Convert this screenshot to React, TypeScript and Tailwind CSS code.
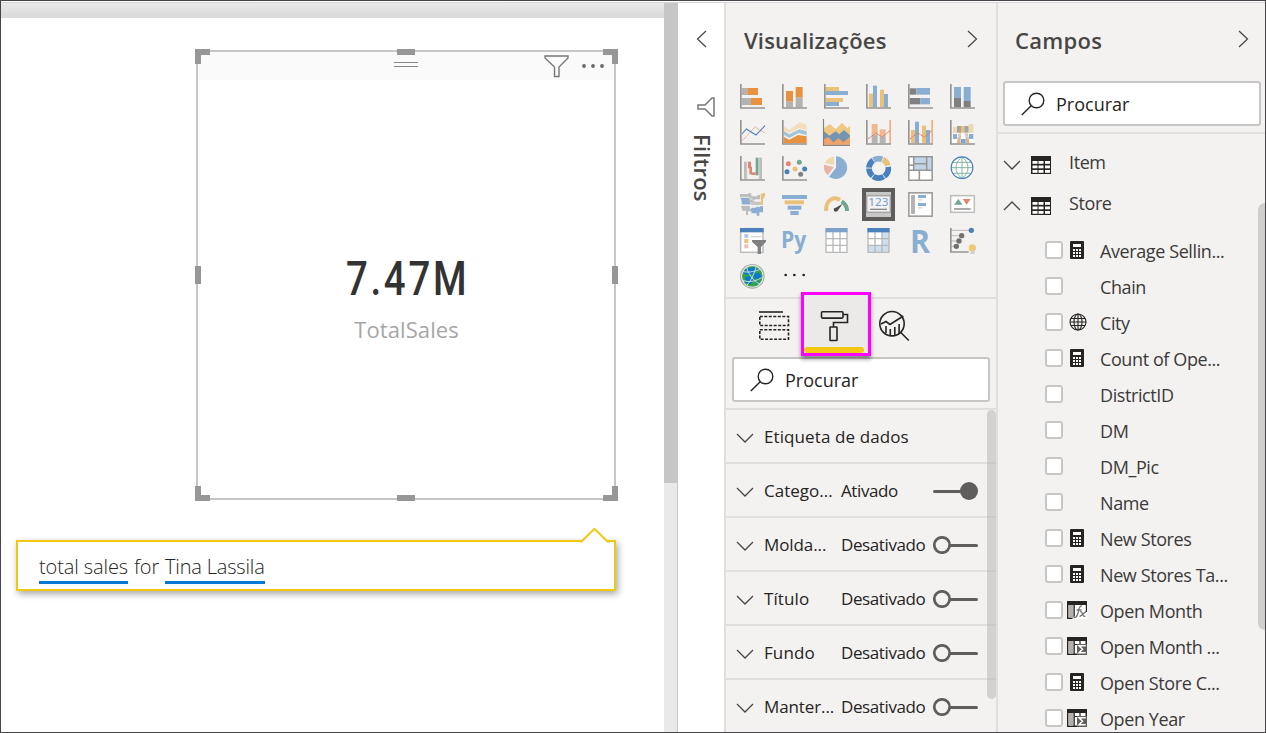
import type { ReactNode } from "react";

const BLUE = "#8aaed2";
const DEEP = "#4a80bb";
const YELLOW = "#e9c17b";
const ORANGE = "#e8913f";
const GRAY = "#b3b3b3";
const DARK = "#808080";
const RED = "#e08570";
const GREEN = "#6fa892";
const AXIS = "#979593";

function Icon({ children }: { children: ReactNode }) {
  return (
    <svg viewBox="0 0 75 75" className="size-[25px] overflow-visible" fill="none">
      {children}
    </svg>
  );
}

const Axis = () => <path d="M2.5 0V72H75" stroke={AXIS} strokeWidth="5" />;

type Bar = [number, number, number, number, string];
function Bars({ items }: { items: Bar[] }) {
  return (
    <>
      {items.map(([x, y, w, h, c], i) => (
        <rect key={i} x={x} y={y} width={w} height={h} fill={c} />
      ))}
    </>
  );
}

const chartIcons: ReactNode[] = [
  <Icon><Bars items={[[5, 12, 17, 21, GRAY], [22, 12, 32, 21, ORANGE], [5, 42, 28, 21, GRAY], [33, 42, 33, 21, ORANGE]]} /><Axis /></Icon>,
  <Icon><Bars items={[[12, 21, 21, 32, ORANGE], [12, 53, 21, 17, GRAY], [41, 9, 21, 32, ORANGE], [41, 41, 21, 29, GRAY]]} /><Axis /></Icon>,
  <Icon><Bars items={[[5, 9, 40, 12, YELLOW], [5, 21, 67, 12, BLUE], [5, 42, 52, 12, YELLOW], [5, 54, 40, 12, BLUE]]} /><Axis /></Icon>,
  <Icon><Bars items={[[9, 29, 12, 41, YELLOW], [21, 5, 12, 65, BLUE], [42, 17, 12, 53, YELLOW], [54, 30, 12, 40, BLUE]]} /><Axis /></Icon>,
  <Icon><Bars items={[[5, 13, 20, 19, DARK], [25, 12, 41, 20, BLUE], [5, 42, 32, 19, DARK], [37, 42, 29, 19, BLUE]]} /><Axis /></Icon>,
  <Icon><Bars items={[[12, 9, 21, 32, BLUE], [12, 41, 21, 29, DARK], [41, 9, 21, 42, BLUE], [41, 51, 21, 19, DARK]]} /><Axis /></Icon>,

  <Icon><path d="M6 63L46 20L58 30L75 39" stroke="#efb5a5" strokeWidth="3" /><path d="M6 42L19 27L48 45L75 17" stroke={DEEP} strokeWidth="3.2" /><Axis /></Icon>,
  <Icon>
    <path d="M5 18L22 29L54 6L74 14V32L52 24L22 40L5 33Z" fill="#f3dfc0" />
    <path d="M5 33L22 43L52 28L74 34V46L50 39L22 54L5 44Z" fill="#a5c3d6" />
    <path d="M5 50L22 59L48 45L74 49V70H5Z" fill={ORANGE} />
    <Axis />
  </Icon>,
  <Icon>
    <path d="M0 24L18 12L35 28L54 8L70 25L78 17V72H0Z" fill="#efc883" />
    <path d="M0 34L16 47L35 34L46 43L60 30L78 46V74H0Z" fill="#7395b2" />
    <path d="M0 57L14 52L28 67L44 54L58 67L78 50V74H0Z" fill="#f0a268" />
    <path d="M-1.5 -3V76.5H78" stroke="#85817d" strokeWidth="3.5" />
  </Icon>,
  <Icon><Bars items={[[17, 12, 18, 32, "#efb890"], [17, 44, 18, 26, GRAY], [41, 28, 18, 21, "#efb890"], [41, 49, 18, 21, GRAY], [70, 0, 5, 70, "#eeae80"]]} /><path d="M6 57L29 39L49 51L72 32" stroke="#df745b" strokeWidth="3" strokeDasharray="4 1" /><Axis /></Icon>,
  <Icon><Bars items={[[9, 30, 12, 40, YELLOW], [21, 5, 12, 65, BLUE], [42, 17, 12, 53, YELLOW], [54, 30, 12, 40, BLUE], [70, 0, 5, 70, "#eeae80"]]} /><path d="M6 57L29 39L49 51L72 32" stroke="#df745b" strokeWidth="3" strokeDasharray="4 1" /><Axis /></Icon>,
  <Icon>
    <Bars items={[[5, 40, 66, 30, "#ffffff"], [9, 21, 12, 18, "#eed9b5"], [21, 18, 12, 20, "#a5a5a5"], [33, 18, 10, 20, YELLOW], [43, 18, 13, 20, "#a5a5a5"], [56, 12, 14, 26, "#eed9b5"], [9, 42, 12, 15, BLUE], [57, 42, 13, 15, BLUE], [32, 57, 15, 12, "#7ca5cf"]]} />
    <path d="M25 42L34 38L30 70H21ZM54 42L45 38L49 70H58Z" fill="#edac79" />
    <path d="M22 57L33 40M56 57L44 40" stroke="#c7d9ea" strokeWidth="5" />
    <Axis />
  </Icon>,

  <Icon>
    <Bars items={[[12, 17, 9, 53, "#bebdbb"], [24, 17, 9, 20, RED], [28, 32, 8, 23, RED], [34, 49, 13, 8, RED], [47, 5, 9, 53, GREEN], [57, 5, 9, 65, "#bebdbb"]]} />
    <path d="M21 17V70M57 5V70" stroke="#dddcda" strokeWidth="2" /><Axis />
  </Icon>,
  <Icon>
    {([[19, 23, RED], [52, 19, GREEN], [39, 39, YELLOW], [15, 47, DEEP], [68, 39, DEEP], [56, 55, DARK]] as [number, number, string][]).map(([x, y, c], i) => <circle key={i} cx={x} cy={y} r="7.5" fill={c} />)}
    <Axis />
  </Icon>,
  <Icon>
    <path d="M36 35V1A34 34 0 1 1 15 62Z" fill={BLUE} />
    <path d="M29 33L0 26A34 34 0 0 0 12 58Z" fill="#e9b3a5" />
    <path d="M30 28V2A33 33 0 0 0 3 21Z" fill="#eed9b0" />
  </Icon>,
  <Icon>
    {([[-31, 52, BLUE], [26, 47, YELLOW], [81, 63, DEEP], [149, 65, DEEP], [219, 50, DEEP], [274, 51, DEEP]] as [number, number, string][]).map(([start, len, c], i) => (
      <circle key={i} cx="38" cy="37" r="29" stroke={c} strokeWidth="17" pathLength="360" strokeDasharray={len + " 400"} transform={"rotate(" + (start - 90) + " 38 37)"} />
    ))}
  </Icon>,
  <Icon>
    <rect x="2" y="2" width="71" height="71" fill="#fff" />
    <Bars items={[[18, 2, 38, 20, "#c2d4e8"], [18, 22, 38, 20, "#c2d4e8"], [56, 2, 16, 40, "#c2d4e8"]]} />
    <path d="M2.5 2.5H72.5V72.5H2.5ZM2 43H73M34 43V73M17 2V43M56 2V43M17 23H56M2 28H17" stroke={AXIS} strokeWidth="4.5" />
  </Icon>,
  <Icon>
    <circle cx="36" cy="35" r="32" fill="#fff" />
    <path d="M36 3V67M36 3C12 19 12 51 36 67M36 3C60 19 60 51 36 67M4 35H68M10 19H62M10 52H62" stroke="#83b5a1" strokeWidth="3" />
    <circle cx="36" cy="35" r="32.5" stroke={DEEP} strokeWidth="3.5" />
  </Icon>,

  <Icon>
    <path d="M0 6H25V4H34V13H52V9H60V22H44V30H27V20H0Z" fill="#bcbcbc" />
    <path d="M3 18H27V28H31V38H6Z" fill={BLUE} />
    <path d="M3 41H30V50H36V58H24V69H18V56H7Z" fill="#bcbcbc" />
    <path d="M31 29H63V39H33Z" fill="#c6c6c6" />
    <path d="M34 47H48V43H69V61H58V71H50V64H34Z" fill={BLUE} />
    <path d="M0 16H27M5 39H32L42 44H60M28 17L41 26H59" stroke="#f3f2f1" strokeWidth="2.5" />
    <path d="M62 6L75 2V13L69 22V38H63Z" fill={YELLOW} />
  </Icon>,
  <Icon><Bars items={[[0, 9, 75, 12, BLUE], [8, 25, 58, 12, YELLOW], [17, 41, 41, 12, BLUE], [25, 57, 25, 12, BLUE]]} /></Icon>,
  <Icon>
    <path d="M6 57C6 19 32 13 48 24" stroke={YELLOW} strokeWidth="12" />
    <path d="M53 28C64 35 69 42 69 57" stroke={GREEN} strokeWidth="12" />
    <path d="M33 49L56 35L40 58Z" fill="#4d4d4d" /><circle cx="35" cy="53" r="6" fill="#4d4d4d" />
  </Icon>,
  <Icon>
    <rect x="-6" y="-6" width="87" height="87" fill="#c8c8c8" stroke="#5d5c5a" strokeWidth="12" />
    <rect x="2" y="11" width="71" height="50" fill="#f3f2f1" stroke="#a6a6a6" strokeWidth="4.5" />
    <text x="37" y="42" textAnchor="middle" fontSize="35" textLength="61" lengthAdjust="spacingAndGlyphs" className="font-['Noto_Sans',sans-serif]" fill="#729fcf">123</text>
    <path d="M12 52H63" stroke="#8a8a8a" strokeWidth="4" />
  </Icon>,
  <Icon>
    <rect x="2.5" y="2.5" width="70" height="70" fill="#fff" stroke="#a19f9d" strokeWidth="5" />
    <Bars items={[[9, 9, 12, 57, GRAY], [30, 9, 24, 9, BLUE], [30, 21, 13, 5, "#dedede"], [30, 33, 24, 9, BLUE], [30, 45, 13, 5, "#dedede"]]} />
  </Icon>,
  <Icon>
    <rect x="2" y="11" width="71" height="50" fill="#fff" stroke="#bdbdbd" strokeWidth="4.5" />
    <path d="M12 38L25 21L38 38Z" fill={GREEN} /><path d="M38 21H62L50 38Z" fill={RED} />
    <path d="M12 51H62" stroke="#808080" strokeWidth="4" />
  </Icon>,

  <Icon>
    <rect x="2" y="2" width="67" height="71" fill="#fff" stroke="#bdbdbd" strokeWidth="4.5" />
    <Bars items={[[0, 0, 71, 13, DEEP], [13, 18, 12, 12, "#b5cce3"], [13, 33, 12, 12, YELLOW], [13, 49, 12, 12, "#edc0b3"], [33, 24, 31, 4, "#d5d5d5"]]} />
    <path d="M36 36H78V41L63 57V78H53V57L36 41Z" fill="#808080" />
  </Icon>,
  <Icon><text x="-3" y="59" fontSize="69" fontWeight="700" textLength="76" lengthAdjust="spacingAndGlyphs" className="font-['Open_Sans',sans-serif]" fill={BLUE}>Py</text></Icon>,
  <Icon>
    <rect x="6" y="2" width="63" height="71" fill="#fff" />
    <path d="M6 12V73H69V12M27 12V73M48 12V73M6 32H69M6 52H69" stroke="#b8b8b8" strokeWidth="4" /><rect x="4" y="0" width="67" height="13" fill="#7ca1cb" />
  </Icon>,
  <Icon>
    <rect x="6" y="2" width="63" height="71" fill="#fff" />
    <Bars items={[[48, 12, 21, 61, "#cfdeed"], [6, 52, 63, 21, "#cfdeed"]]} />
    <path d="M6 12V73H69V12M27 12V73M48 12V73M6 32H69M6 52H69" stroke="#b8b8b8" strokeWidth="4" /><rect x="4" y="0" width="67" height="13" fill={DEEP} />
  </Icon>,
  <Icon><text x="6" y="74" fontSize="98" fontWeight="700" textLength="60" lengthAdjust="spacingAndGlyphs" className="font-['Open_Sans',sans-serif]" fill={BLUE}>R</text></Icon>,
  <Icon>
    <path d="M3 7H63M3 23H35M3 39H27M3 55H19" stroke="#c8c6c4" strokeWidth="4" />
    <path d="M2.5 0V72H56" stroke={AXIS} strokeWidth="5" />
    <circle cx="64" cy="7" r="8" fill={DEEP} /><circle cx="35" cy="23" r="8" fill="#75706c" /><circle cx="27" cy="39" r="8" fill="#75706c" /><circle cx="19" cy="55" r="8" fill="#75706c" />
    <circle cx="67" cy="60" r="11" fill="#eec978" /><rect x="61" y="70" width="13" height="8" fill="#cfcfcf" />
  </Icon>,

  <Icon>
    <circle cx="37" cy="37" r="31" fill="#35a548" />
    <path d="M18 15L43 9L55 18L43 28L24 33L10 29ZM37 31L56 26L66 38L53 48L42 42ZM14 39L33 36L41 48L32 62L18 57ZM49 53L60 50L48 64Z" fill="#0c78cd" />
    <path d="M19 7C24 29 40 53 62 61M7 22C23 27 50 23 65 13M5 47C26 58 50 52 72 36M49 3C46 23 34 51 18 66" stroke="#d3dfe2" strokeWidth="2.8" />
    <circle cx="37" cy="37" r="35.5" stroke="#a9a9a9" strokeWidth="3.5" />
  </Icon>,
  <Icon><circle cx="11" cy="33" r="4" fill="#252423" /><circle cx="37" cy="33" r="4" fill="#252423" /><circle cx="65" cy="33" r="4" fill="#252423" /></Icon>,
];

function Chevron({ dir, className = "" }: { dir: "left" | "right" | "up" | "down"; className?: string }) {
  const vertical = dir === "up" || dir === "down";
  const paths = { left: "M10 1L1.5 9L10 17", right: "M1 1L9.5 9L1 17", up: "M1 9L9 1L17 9", down: "M1 1L9 9L17 1" };
  return (
    <svg className={className} width={vertical ? 18 : 11} height={vertical ? 10 : 18} fill="none" stroke="#484644" strokeWidth="1.25">
      <path d={paths[dir]} />
    </svg>
  );
}

function SearchBox() {
  return (
    <div className="flex h-[45px] w-[258px] items-center rounded-[3px] border-2 border-[#c8c6c4] bg-white pl-4">
      <svg width="24" height="24" fill="none" stroke="#252423" strokeWidth="1.4">
        <circle cx="15.5" cy="8.5" r="7.3" /><path d="M10.2 13.8L0.8 23" />
      </svg>
      <span className="mt-[2px] ml-[11px] text-[18px] font-[370] text-[#252423]">Procurar</span>
    </div>
  );
}

function Toggle({ on }: { on: boolean }) {
  return (
    <svg width="45" height="18" fill="none" stroke="#605e5c" strokeWidth="3" className="mt-[2px] ml-auto shrink-0">
      {on ? <><path d="M1.5 9.5H30" strokeLinecap="round" /><circle cx="36" cy="9" r="9" fill="#605e5c" stroke="none" /></>
        : <><circle cx="9" cy="9" r="7.7" strokeWidth="2.7" /><path d="M17 9.5H43.5" strokeLinecap="round" /></>}
    </svg>
  );
}

const settings: { name: string; state?: "Ativado" | "Desativado"; spacing: string }[] = [
  { name: "Etiqueta de dados", spacing: "tracking-[0.1px]" },
  { name: "Catego...", state: "Ativado", spacing: "tracking-[0px]" },
  { name: "Molda...", state: "Desativado", spacing: "tracking-[-0.1px]" },
  { name: "Título", state: "Desativado", spacing: "tracking-[0.1px]" },
  { name: "Fundo", state: "Desativado", spacing: "tracking-[0.1px]" },
  { name: "Manter...", state: "Desativado", spacing: "tracking-[-0.1px]" },
];

type Kind = "calc" | "globe" | "fx" | "sum" | null;
const fields: [string, Kind][] = [
  ["Average Sellin...", "calc"], ["Chain", null], ["City", "globe"], ["Count of Ope...", "calc"],
  ["DistrictID", null], ["DM", null], ["DM_Pic", null], ["Name", null], ["New Stores", "calc"],
  ["New Stores Ta...", "calc"], ["Open Month", "fx"], ["Open Month ...", "sum"], ["Open Store C...", "calc"], ["Open Year", "sum"],
];

function FieldIcon({ kind }: { kind: Kind }) {
  if (kind === "calc")
    return (
      <svg width="20" height="18">
        <rect x="3" width="14" height="18" rx="1" fill="#252423" /><rect x="6" y="3" width="8" height="3" fill="#fff" />
        {[8, 11, 14].map((y) => [6, 9, 12].map((x) => <rect key={x + "-" + y} x={x} y={y} width="2" height="2" fill="#fff" />))}
      </svg>
    );
  if (kind === "globe")
    return (
      <svg width="20" height="18" fill="none" stroke="#252423" strokeWidth="1.1">
        <circle cx="11" cy="9" r="8" /><ellipse cx="11" cy="9" rx="4" ry="8" /><path d="M11 1V17M3 9H19M4 5.5H18M4 12.5H18" />
      </svg>
    );
  if (kind === null) return <span className="w-5" />;
  return (
    <svg width="20" height="18" fill="none">
      <rect x=".75" y=".75" width="18.5" height="16.5" fill="#fff" stroke="#252423" strokeWidth="1.5" />
      <rect width="20" height="4" fill="#252423" /><rect x="1.5" y="4" width="5" height="12.5" fill="#b3b0ad" />
      <path d="M7.2 4V17" stroke="#252423" strokeWidth="1.3" />
      {kind === "fx" ? (
        <>
          <path d="M5 18L10 13L12 4H20V18Z" fill="#fff" />
          <path d="M15 5C12.5 4.5 12.2 7 11.5 10C10.5 14 10 17 7 16.5M9.5 9H14.5M13 11C16 9 15 17 18.5 15M19 11C17 11 15 15 12.5 15.5" stroke="#777" strokeWidth="1.3" />
          <path d="M19.4 3V11" stroke="#252423" strokeWidth="1.2" />
        </>
      ) : (
        <>
          <path d="M7 7.5H19M13 4V8" stroke="#252423" strokeWidth="1.2" />
          <rect x="10" y="7" width="10" height="11" fill="#605e5c" />
          <path d="M18 9.5V8.8H12L15.5 12.3L12 15.8H18V15" stroke="#fff" strokeWidth="1.5" />
        </>
      )}
    </svg>
  );
}

function TableRow({ name, open }: { name: string; open: boolean }) {
  return (
    <div className="flex h-[41px] items-center pl-[5px]">
      <Chevron dir={open ? "up" : "down"} className="mt-1" />
      <svg width="20" height="18" className="mt-1 ml-[10px]">
        <rect width="20" height="18" fill="#252423" />
        {[5, 9.5, 14].map((y) => [1.5, 7.5, 14].map((x) => <rect key={x + "-" + y} x={x} y={y} width="5" height="2.8" fill="#fff" />))}
      </svg>
      <span className="ml-[18px] text-[18px] font-[370] tracking-[-0.4px]">{name}</span>
    </div>
  );
}

function Handles() {
  return (
    <div className="pointer-events-none absolute -inset-[2px] text-[#979797]">
      <i className="absolute top-[-1px] left-[-1px] size-[15px] border-t-[6px] border-l-[6px]" />
      <i className="absolute top-[-1px] right-[-2px] size-[15px] border-t-[6px] border-r-[6px]" />
      <i className="absolute bottom-[-1px] left-[-1px] size-[15px] border-b-[6px] border-l-[6px]" />
      <i className="absolute right-[-2px] bottom-[-1px] size-[15px] border-r-[6px] border-b-[6px]" />
      <i className="absolute top-[-1px] left-[201px] h-[6px] w-[18px] bg-[#979797]" />
      <i className="absolute bottom-[-1px] left-[201px] h-[6px] w-[18px] bg-[#979797]" />
      <i className="absolute top-[216px] left-[-1px] h-[18px] w-[6px] bg-[#979797]" />
      <i className="absolute top-[216px] right-[-2px] h-[18px] w-[6px] bg-[#979797]" />
    </div>
  );
}

function ReportCanvas() {
  return (
    <main className="w-[663px] shrink-0">
      <div className="h-[15px] bg-linear-to-b from-[#e9e9e9] to-[#d9d9d9]" />
      <section className="relative mt-[32px] ml-[195px] h-[450px] w-[420px] border-2 border-[#c6c6c6] bg-white">
        <div className="relative flex h-[28px] items-center justify-end gap-[13px] bg-[#fafafa] pr-[10px] pb-px">
          <svg className="absolute top-[10px] left-[196px]" width="24" height="7" stroke="#8a8886"><path d="M0 .5H24M0 4.5H24" /></svg>
          <svg width="25" height="23" className="-mb-0.5" fill="none" stroke="#797775" strokeWidth="1.4"><path d="M1 1H24V3L15 12V21.5H10.5V12L1 3Z" /></svg>
          <svg width="22" height="4" fill="#6a6866"><circle cx="2" cy="2" r="1.9" /><circle cx="11" cy="2" r="1.9" /><circle cx="20" cy="2" r="1.9" /></svg>
        </div>
        <div className="flex flex-col items-center pt-[171px]">
          <span className="scale-x-[0.8] pl-[5px] font-['Roboto',sans-serif] text-[48px] leading-[56px] font-medium tracking-[3.4px] text-[#333]">7.47M</span>
          <span className="mt-[7px] pl-px text-[22px] leading-[30px] font-[370] tracking-[0.1px] text-[#a6a6a6]">TotalSales</span>
        </div>
        <Handles />
      </section>
      <section className="relative mt-[40px] ml-[15px] flex h-[51px] w-[600px] items-center border-2 border-[#f2c811] bg-white pl-[21px] text-[20px] font-light text-[#252423] shadow-[2px_3px_7px_rgba(0,0,0,0.35)]">
        <svg className="absolute top-[-15px] left-[562px]" width="30" height="17" fill="white"><path d="M1.5 15L14.5 1.8L27.5 15V17H1.5Z" /><path d="M0 14.5H1.5L14.5 1.8L27.5 14.5H30" fill="none" stroke="#f2c811" strokeWidth="2" /></svg>
        <span className="mt-[5px] h-[31px] border-b-[3px] border-[#0078d4] leading-[28px] tracking-[-0.1px]">total sales</span>
        <span className="mt-[5px] h-[31px] px-[6px] leading-[28px] tracking-[-0.2px]">for</span>
        <span className="mt-[5px] h-[31px] border-b-[3px] border-[#0078d4] leading-[28px] tracking-[-0.18px]">Tina Lassila</span>
      </section>
    </main>
  );
}

function VisualizationsPane() {
  return (
    <aside className="relative w-[271px] shrink-0 border-r border-[#e1dfdd] bg-[#f3f2f1]">
      <header className="flex h-[81px] items-start justify-between pt-[21px] pr-[18px] pl-[18px]">
        <h2 className="text-[22px] leading-[32px] font-semibold tracking-[0.15px] text-[#484644]">Visualizações</h2>
        <Chevron dir="right" className="mt-[6px]" />
      </header>
      <div className="grid h-[213px] grid-cols-[repeat(6,25px)] content-start gap-x-[17px] gap-y-[11px] pl-[14px]">
        {chartIcons.map((icon, i) => <div key={i} className="h-[25px]">{icon}</div>)}
      </div>
      <div className="flex h-[60px] border-t-2 border-[#e1dfdd]">
        <div className="w-[75px] pt-[12px] pl-[33px]">
          <svg width="31" height="31" fill="none" stroke="#252423" strokeWidth="1.6"><path d="M0 1H24" /><path d="M.8 5.5H29.5V14.5H.8ZM.8 18.8H29.5V28.2H.8Z" strokeDasharray="3 1.5" /></svg>
        </div>
        <div className="relative z-10 -mt-[7px] flex h-[64px] w-[70px] justify-center border-[3px] border-[#ff00ff] bg-[#ebeae9] pt-[15px] shadow-[0_3px_4px_rgba(0,0,0,0.45)]">
          <svg width="30" height="32" className="mr-[3px]" fill="none" stroke="#252423" strokeWidth="1.6">
            <rect x="1.5" y="1.8" width="21.5" height="6.3" rx="1" /><path d="M23 4.5H27.5V12.5H13.5V17" /><rect x="10" y="17" width="7" height="13.5" rx=".5" />
          </svg>
          <span className="absolute bottom-0 left-0 h-[6px] w-[60px] rounded-full bg-[#f2c811]" />
        </div>
        <svg width="32" height="32" className="mt-[11px] ml-[7px]" fill="none" stroke="#252423" strokeWidth="1.6">
          <circle cx="14" cy="13.7" r="12.2" /><path d="M22.8 22.5L30.8 30.5M3 14L8 11.5L12 14.5L25.3 6M8 16V23M12.3 19V25M16.8 17V25M21.1 14V23" />
        </svg>
      </div>
      <div className="ml-[6px]"><SearchBox /></div>
      <div className="mt-[6px] h-[324px]">
        {settings.map(({ name, state, spacing }) => (
          <div key={name} className="flex h-[54px] items-center border-t-2 border-[#e1dfdd] pr-[18px] pl-[10px] text-[17px] font-[370] text-[#252423]">
            <Chevron dir="down" className="mt-[3px] shrink-0" />
            <span className={"mt-[2px] ml-[10px] shrink-0 whitespace-nowrap " + spacing + (state ? " w-[77px]" : "")}>{name}</span>
            {state && <><span className="mt-[2px] tracking-[-0.4px]">{state}</span><Toggle on={state === "Ativado"} /></>}
          </div>
        ))}
      </div>
      <span className="absolute top-[407px] right-0 h-[289px] w-[9px] rounded-full bg-[#b9b7b5]/55" />
    </aside>
  );
}

function FieldsPane() {
  return (
    <aside className="relative min-w-0 flex-1 border-l border-[#e1dfdd] bg-[#f3f2f1]">
      <header className="flex h-[78px] items-start justify-between pt-[21px] pr-[16px] pl-[17px]">
        <h2 className="text-[22px] leading-[32px] font-semibold tracking-[0.3px] text-[#484644]">Campos</h2>
        <Chevron dir="right" className="mt-[6px]" />
      </header>
      <div className="h-[53px] border-b-2 border-[#e1dfdd] pl-[5px]"><SearchBox /></div>
      <div className="pt-[8px] text-[#3b3a39]">
        <TableRow name="Item" open={false} />
        <TableRow name="Store" open />
        <ul className="mt-[8px]">
          {fields.map(([name, kind]) => (
            <li key={name} className="flex h-[36px] items-center pl-[47px] text-[18px]">
              <span className="size-[18px] rounded-[3px] border-2 border-[#c8c6c4] bg-white" />
              <span className="ml-1 flex w-5"><FieldIcon kind={kind} /></span>
              <span className="mt-[2px] ml-[13px] font-[370] whitespace-nowrap tracking-[-0.4px]">{name}</span>
            </li>
          ))}
        </ul>
      </div>
      <span className="absolute top-[200px] right-0 h-[427px] w-[7px] rounded-l-full bg-[#d0cfce]" />
    </aside>
  );
}

export default function App() {
  return (
    <div className="h-[733px] w-[1266px] overflow-hidden border border-[#484447] bg-white pt-px font-['Open_Sans',sans-serif]">
      <div className="flex h-[731px] border-t border-[#d8d6d8]">
        <ReportCanvas />
        <div className="w-[14px] shrink-0 border-r border-[#c8c8c8] bg-[#e9e9e9]"><div className="h-[480px] w-[14px] bg-[#c6c6c6]" /></div>
        <aside className="flex w-[48px] shrink-0 flex-col items-center border-r-2 border-[#e1dfdd] bg-white">
          <Chevron dir="left" className="mt-[27px]" />
          <svg width="18" height="20" className="mt-[49px] ml-[9px]" fill="none" stroke="#797775" strokeWidth="1.5"><path d="M17 1V19H15L8 12H1V8H8L15 1Z" /></svg>
          <span className="mt-[17px] ml-[3px] text-[22px] leading-[28px] font-semibold tracking-[0.2px] text-[#484644] [writing-mode:vertical-rl]">Filtros</span>
        </aside>
        <VisualizationsPane />
        <FieldsPane />
      </div>
    </div>
  );
}
